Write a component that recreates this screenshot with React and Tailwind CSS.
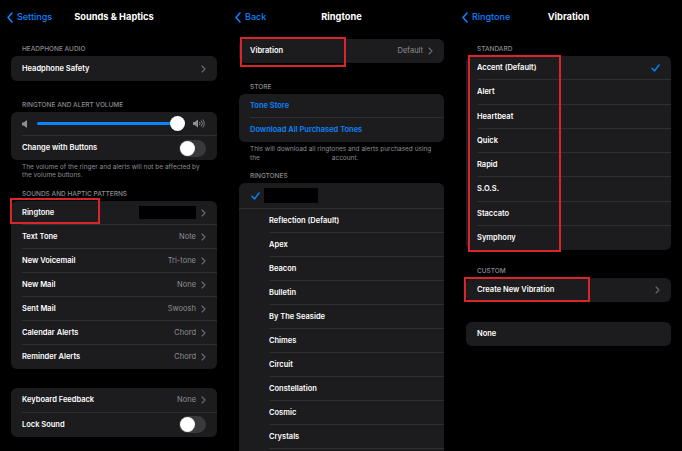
import React from 'react';

const Chevron = () => (
  <svg width="5" height="8" viewBox="0 0 5 8" className="ml-[5px] shrink-0">
    <path d="M1 1l3 3-3 3" fill="none" stroke="#6c6c70" strokeWidth="1.1" strokeLinecap="round" strokeLinejoin="round" />
  </svg>
);

const Check = () => (
  <svg width="9" height="8" viewBox="0 0 9 8" className="shrink-0">
    <path d="M1 4.3l2.5 2.6L8 1" fill="none" stroke="#0a84ff" strokeWidth="1.4" strokeLinecap="round" strokeLinejoin="round" />
  </svg>
);

const Toggle = () => (
  <div className="w-[27px] h-[17px] rounded-full bg-[#39393d] p-[1px] shrink-0">
    <div className="w-[15px] h-[15px] rounded-full bg-white" />
  </div>
);

const Header = ({ back, title }) => (
  <div className="grid grid-cols-[1fr_auto_1fr] items-center h-[34px] px-[7px]">
    <div className="flex items-center gap-[4px] text-[#0a84ff] text-[9px] font-medium">
      <svg width="6" height="11" viewBox="0 0 6 11">
        <path d="M5 1L1 5.5 5 10" fill="none" stroke="#0a84ff" strokeWidth="1.6" strokeLinecap="round" strokeLinejoin="round" />
      </svg>
      {back}
    </div>
    <div className="text-white text-[9.25px] font-bold">{title}</div>
    <div />
  </div>
);

const Label = ({ children, h }) => (
  <div className={`flex items-end px-[11px] pb-[3px] text-[6.5px] leading-[8px] font-medium uppercase text-[#8d8d93] ${h}`}>
    {children}
  </div>
);

const Card = ({ children, className = '' }) => (
  <div className={`relative rounded-[6px] bg-[#1c1c1e] ${className}`}>{children}</div>
);

const Row = ({ label, value, chevron, last, h = 'h-[24px]', blue, children, pl = 'pl-[11px]' }) => (
  <div className={pl}>
    <div className={`flex items-center pr-[11px] ${h} ${last ? '' : 'border-b border-[#2f2f31]'}`}>
      <span className={`flex-1 text-[7.5px] font-semibold ${blue ? 'text-[#0a84ff]' : 'text-white'}`}>{label}</span>
      {value && <span className="text-[7.5px] text-[#8e8e93]">{value}</span>}
      {children}
      {chevron && <Chevron />}
    </div>
  </div>
);

const RedBox = ({ className }) => (
  <div className={`absolute border-2 border-[#d9262c] pointer-events-none ${className}`} />
);

const SoundsPanel = () => {
  const patterns = [
    ['Text Tone', 'Note'],
    ['New Voicemail', 'Tri-tone'],
    ['New Mail', 'None'],
    ['Sent Mail', 'Swoosh'],
    ['Calendar Alerts', 'Chord'],
    ['Reminder Alerts', 'Chord'],
  ];
  return (
    <div className="w-[228px] shrink-0">
      <Header back="Settings" title="Sounds & Haptics" />
      <div className="px-[11px]">
        <Label h="h-[22px]">Headphone Audio</Label>
        <Card>
          <Row label="Headphone Safety" chevron last h="h-[25px]" />
        </Card>
        <Label h="h-[31px]">Ringtone and Alert Volume</Label>
        <Card>
          <div className="pl-[11px]">
            <div className="flex items-center h-[24px] pr-[11px] border-b border-[#2f2f31]">
              <svg width="6" height="8" viewBox="0 0 6 8" className="shrink-0">
                <path d="M0 2.5h1.7L5 0v8L1.7 5.5H0z" fill="#8e8e93" />
              </svg>
              <div className="flex-1 ml-[9px] h-[2.5px] rounded-full bg-[#0a84ff]" />
              <div className="w-[15px] h-[15px] -ml-[3px] rounded-full bg-white shadow shrink-0" />
              <svg width="13" height="9" viewBox="0 0 13 9" className="ml-[8px] shrink-0">
                <path d="M0 3h1.7L5 0.5v8L1.7 6H0z" fill="#8e8e93" />
                <path d="M6.6 3.2a1.8 1.8 0 0 1 0 2.6M8.3 1.9a3.8 3.8 0 0 1 0 5.2M10 0.8a5.6 5.6 0 0 1 0 7.4" fill="none" stroke="#8e8e93" strokeWidth="0.9" strokeLinecap="round" />
              </svg>
            </div>
          </div>
          <Row label="Change with Buttons" last>
            <Toggle />
          </Row>
        </Card>
        <div className="px-[11px] pt-[3px] text-[6.5px] leading-[8px] text-[#8d8d93] whitespace-nowrap">
          The volume of the ringer and alerts will not be affected by
          <br />
          the volume buttons.
        </div>
        <Label h="h-[22px]">Sounds and Haptic Patterns</Label>
        <Card>
          <Row label="Ringtone" chevron>
            <div className="w-[57px] h-[13px] bg-black" />
          </Row>
          {patterns.map(([l, v], i) => (
            <Row key={l} label={l} value={v} chevron last={i === patterns.length - 1} />
          ))}
          <RedBox className="-left-[1px] -top-[3px] w-[90px] h-[26px]" />
        </Card>
        <Card className="mt-[19px]">
          <Row label="Keyboard Feedback" value="None" chevron h="h-[24.5px]" />
          <Row label="Lock Sound" last h="h-[24.5px]">
            <Toggle />
          </Row>
        </Card>
      </div>
    </div>
  );
};

const RingtonePanel = () => {
  const tones = [
    'Reflection (Default)',
    'Apex',
    'Beacon',
    'Bulletin',
    'By The Seaside',
    'Chimes',
    'Circuit',
    'Constellation',
    'Cosmic',
    'Crystals',
  ];
  return (
    <div className="w-[227px] shrink-0">
      <Header back="Back" title="Ringtone" />
      <div className="px-[11px]">
        <Card className="mt-[5px]">
          <Row label="Vibration" value="Default" chevron last />
          <RedBox className="left-[1px] -top-[2px] w-[106px] h-[30px]" />
        </Card>
        <Label h="h-[31px]">Store</Label>
        <Card>
          <Row label="Tone Store" blue />
          <Row label="Download All Purchased Tones" blue last />
        </Card>
        <div className="px-[11px] pt-[3px] text-[6.5px] leading-[8.5px] text-[#8d8d93] whitespace-nowrap">
          This will download all ringtones and alerts purchased using
          <br />
          the<span className="inline-block w-[72px]" />account.
        </div>
        <Label h="h-[21px]">Ringtones</Label>
        <Card className="h-[290px]">
          <div className="flex items-center h-[26px] pl-[12px] border-b border-[#2f2f31]">
            <Check />
            <div className="ml-[4px] w-[54px] h-[15px] bg-black" />
          </div>
          {tones.map((t) => (
            <Row key={t} label={t} pl="pl-[30px]" />
          ))}
        </Card>
      </div>
    </div>
  );
};

const VibrationPanel = () => {
  const standard = ['Accent (Default)', 'Alert', 'Heartbeat', 'Quick', 'Rapid', 'S.O.S.', 'Staccato', 'Symphony'];
  return (
    <div className="w-[227px] shrink-0">
      <Header back="Ringtone" title="Vibration" />
      <div className="px-[11px]">
        <Label h="h-[22px]">Standard</Label>
        <Card>
          {standard.map((s, i) => (
            <Row key={s} label={s} h="h-[24.25px]" last={i === standard.length - 1}>
              {i === 0 && <Check />}
            </Row>
          ))}
          <RedBox className="left-[2px] -top-[1px] w-[93px] h-[197px]" />
        </Card>
        <Label h="h-[28px]">Custom</Label>
        <Card>
          <Row label="Create New Vibration" chevron last />
          <RedBox className="-left-[2px] -top-[1px] w-[126px] h-[25px]" />
        </Card>
        <Card className="mt-[20px]">
          <Row label="None" last />
        </Card>
      </div>
    </div>
  );
};

export default function App() {
  return (
    <div className="w-[682px] h-[451px] bg-black flex overflow-hidden font-['Inter','Noto_Sans',sans-serif] antialiased">
      <SoundsPanel />
      <RingtonePanel />
      <VibrationPanel />
    </div>
  );
}
